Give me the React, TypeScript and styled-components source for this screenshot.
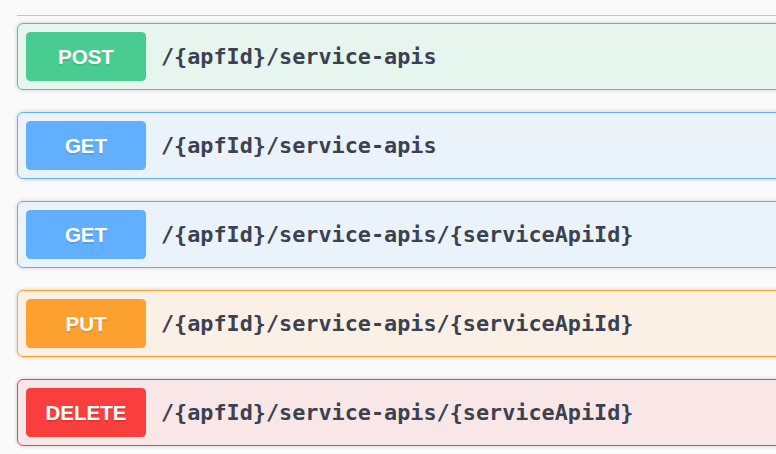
import React from "react";
import styled, { createGlobalStyle } from "styled-components";

const Global = createGlobalStyle`
  html, body { margin: 0; padding: 0; background: #fafafa; overflow: hidden; }
  body { width: 776px; height: 454px; }
`;

type Method = "post" | "get" | "put" | "delete";

const colors: Record<Method, { main: string; bg: string }> = {
  post: { main: "#49cc90", bg: "rgba(73,204,144,.1)" },
  get: { main: "#61affe", bg: "rgba(97,175,254,.1)" },
  put: { main: "#fca130", bg: "rgba(252,161,48,.1)" },
  delete: { main: "#f93e3e", bg: "rgba(249,62,62,.1)" },
};

const Page = styled.div`
  padding: 15px 0 0 17px;
  width: 840px;
`;

const TagLine = styled.div`
  height: 1px;
  background: rgba(59, 65, 81, 0.3);
  margin-bottom: 7px;
`;

const List = styled.div`
  display: flex;
  flex-direction: column;
  gap: 22px;
`;

const Block = styled.div<{ $m: Method }>`
  border: 1px solid ${(p) => colors[p.$m].main};
  background: ${(p) => colors[p.$m].bg};
  border-radius: 6px;
  box-shadow: 0 0 4px rgba(0, 0, 0, 0.19);
  padding: 8px;
  display: flex;
  align-items: center;
  gap: 15px;
`;

const Badge = styled.span<{ $m: Method }>`
  width: 120px;
  height: 49px;
  border-radius: 4.5px;
  background: ${(p) => colors[p.$m].main};
  color: #fff;
  font-family: "Liberation Sans", Arial, sans-serif;
  font-weight: 700;
  font-size: 20.5px;
  display: flex;
  align-items: center;
  justify-content: center;
  text-shadow: 0 1.5px 0 rgba(0, 0, 0, 0.1);
`;

const Path = styled.span`
  font-family: "DejaVu Sans Mono", "Liberation Mono", monospace;
  font-weight: 700;
  font-size: 21.8px;
  color: #3b4151;
`;

const ops: { m: Method; label: string; path: string }[] = [
  { m: "post", label: "POST", path: "/{apfId}/service-apis" },
  { m: "get", label: "GET", path: "/{apfId}/service-apis" },
  { m: "get", label: "GET", path: "/{apfId}/service-apis/{serviceApiId}" },
  { m: "put", label: "PUT", path: "/{apfId}/service-apis/{serviceApiId}" },
  { m: "delete", label: "DELETE", path: "/{apfId}/service-apis/{serviceApiId}" },
];

export default function App() {
  return (
    <>
      <Global />
      <Page>
        <TagLine />
        <List>
          {ops.map((o, i) => (
            <Block key={i} $m={o.m}>
              <Badge $m={o.m}>{o.label}</Badge>
              <Path>{o.path}</Path>
            </Block>
          ))}
        </List>
      </Page>
    </>
  );
}
